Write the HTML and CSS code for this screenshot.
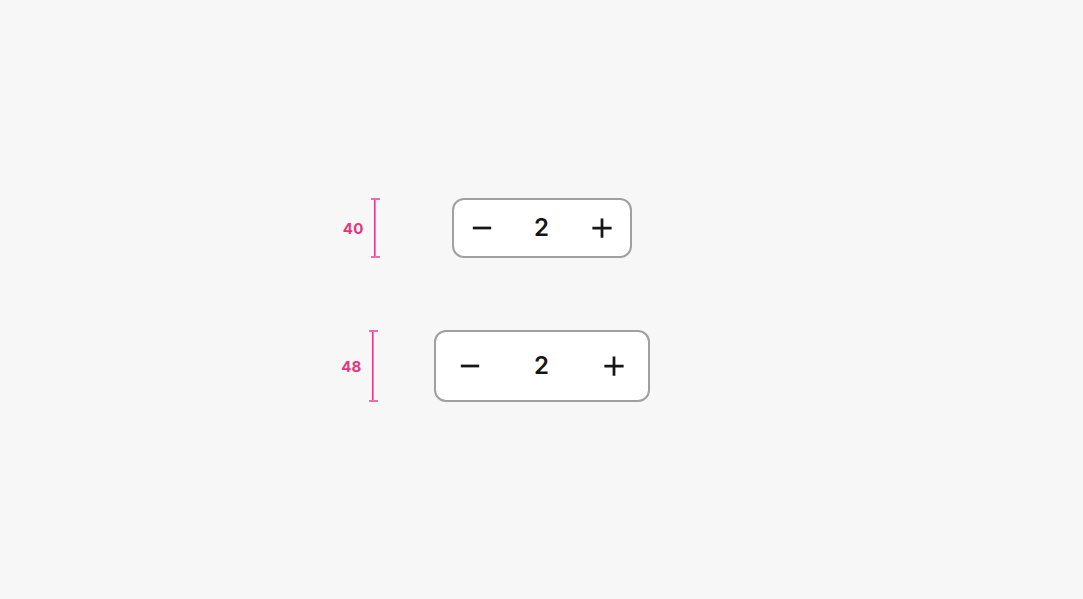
FILE: index.html
```html
<!DOCTYPE html>
<html lang="en">
<head>
<meta charset="utf-8">
<title>Stepper sizes</title>
<link rel="stylesheet" href="styles.css">
</head>
<body>
<main class="sheet">
  <div class="size-note">
    <span class="size-label">40</span>
    <span class="bracket"></span>
  </div>
  <div class="stepper stepper-md">
    <button class="step-btn" aria-label="Decrease">
      <svg viewBox="0 0 24 24"><path d="M2 12h20"/></svg>
    </button>
    <span class="step-value">2</span>
    <button class="step-btn" aria-label="Increase">
      <svg viewBox="0 0 24 24"><path d="M1.5 12h21M12 1.5v21"/></svg>
    </button>
  </div>
  <div class="spacer"></div>

  <div class="size-note size-note-lg">
    <span class="size-label">48</span>
    <span class="bracket"></span>
  </div>
  <div class="stepper stepper-lg">
    <button class="step-btn" aria-label="Decrease">
      <svg viewBox="0 0 24 24"><path d="M2 12h20"/></svg>
    </button>
    <span class="step-value">2</span>
    <button class="step-btn" aria-label="Increase">
      <svg viewBox="0 0 24 24"><path d="M1.5 12h21M12 1.5v21"/></svg>
    </button>
  </div>
  <div class="spacer"></div>
</main>
</body>
</html>
```

FILE: styles.css
```css
* { box-sizing: border-box; }

html, body {
  margin: 0;
  height: 100%;
  background: #f7f7f7;
}

body {
  font-family: Inter, "Noto Sans", sans-serif;
  color: #161616;
}

.sheet {
  height: 100%;
  display: grid;
  grid-template-columns: 1fr auto 1fr;
  align-content: center;
  row-gap: 72px;
}

.size-note {
  justify-self: end;
  margin-right: 54px;
  display: flex;
  align-items: center;
  gap: 7px;
}

.size-note-lg {
  margin-right: 56px;
}

.size-label {
  padding-top: 2px;
  font-size: 15px;
  font-weight: 700;
  color: #e5357f;
  letter-spacing: 0.2px;
}

.bracket {
  align-self: stretch;
  width: 9px;
  border-top: 2px solid #ee6aa9;
  border-bottom: 2px solid #ee6aa9;
  background: linear-gradient(#e8378b, #e8378b) center / 1.6px 100% no-repeat;
}

.stepper {
  justify-self: center;
  display: grid;
  grid-auto-flow: column;
  align-items: center;
  justify-items: center;
  background: #ffffff;
  border: 2px solid #a0a0a0;
  border-radius: 12px;
}

.stepper-md {
  width: 180px;
  height: 60px;
  grid-template-columns: 56px 1fr 56px;
}

.stepper-lg {
  width: 216px;
  height: 72px;
  grid-template-columns: 68px 1fr 68px;
}

.step-btn {
  width: 100%;
  height: 100%;
  padding: 0;
  border: 0;
  background: transparent;
  display: flex;
  align-items: center;
  justify-content: center;
  cursor: pointer;
}

.step-btn svg {
  width: 22px;
  height: 22px;
  fill: none;
  stroke: #161616;
  stroke-width: 3;
}

.step-value {
  font-size: 24px;
  font-weight: 600;
  line-height: 1;
}
```
